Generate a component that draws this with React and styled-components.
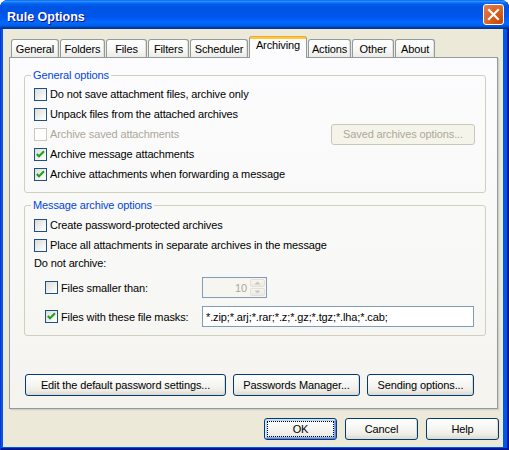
import React from "react";
import styled, { createGlobalStyle } from "styled-components";

const GlobalStyle = createGlobalStyle`
  html, body {
    margin: 0;
    padding: 0;
    background: #ffffff;
  }
  body {
    font-family: "Liberation Sans", Arial, sans-serif;
    font-size: 11px;
    letter-spacing: -0.12px;
    color: #000;
  }
`;

const Window = styled.div`
  width: 509px;
  height: 450px;
  display: flex;
  flex-direction: column;
  border-radius: 8px 8px 0 0;
  overflow: hidden;
  background: #0058e8;
  box-shadow: inset 1px 0 #0831d9, inset -1px -1px #00138c, inset -2px -2px #001ea0;
`;

const TitleBar = styled.div`
  flex: none;
  height: 29px;
  box-sizing: border-box;
  display: flex;
  align-items: center;
  justify-content: space-between;
  padding: 1px 5px 0 7px;
  background: linear-gradient(
    180deg,
    #0058ee 0%,
    #3593ff 4%,
    #288eff 6%,
    #127dff 8%,
    #036ffc 10%,
    #0262ee 14%,
    #0057e5 20%,
    #0054e3 24%,
    #0055eb 56%,
    #005bf5 66%,
    #026afe 76%,
    #0062ef 86%,
    #0052d6 92%,
    #0040ab 94%,
    #003092 100%
  );
`;

const Title = styled.span`
  color: #ffffff;
  font-weight: bold;
  font-size: 12.5px;
  letter-spacing: 0;
  padding-top: 3px;
  text-shadow: 1px 1px #0f1089;
`;

const CloseButton = styled.div`
  width: 21px;
  height: 21px;
  box-sizing: border-box;
  border: 1px solid #ffffff;
  border-radius: 3px;
  background: radial-gradient(circle at 85% 85%, #cc4600 0%, #dc6527 55%, #e5805a 100%);
  display: flex;
  align-items: center;
  justify-content: center;
  margin-bottom: 2px;
`;

const Frame = styled.div`
  flex: 1;
  display: flex;
  padding: 0 6px 3px 3px;
`;

const Client = styled.div`
  flex: 1;
  display: flex;
  flex-direction: column;
  background: #ece9d8;
`;

const TabStrip = styled.div`
  display: flex;
  align-items: flex-end;
  gap: 1px;
  height: 21px;
  margin-top: 7px;
  padding-left: 8px;
`;

const Tab = styled.div`
  position: relative;
  z-index: ${(p) => (p.$active ? 2 : 1)};
  box-sizing: border-box;
  width: ${(p) => p.$w}px;
  height: ${(p) => (p.$active ? 22 : 18)}px;
  margin-bottom: ${(p) => (p.$active ? -1 : 0)}px;
  display: flex;
  align-items: center;
  justify-content: center;
  padding-bottom: ${(p) => (p.$active ? 4 : 0)}px;
  padding-top: ${(p) => (p.$active ? 0 : 1)}px;
  border: 1px solid #919b9c;
  border-bottom: none;
  border-top: ${(p) => (p.$active ? "none" : "1px solid #919b9c")};
  border-radius: 3px 3px 0 0;
  background: ${(p) =>
    p.$active
      ? "linear-gradient(180deg, #e68b2c 0px, #ffc73c 1px, #ffc73c 3px, #fcfcfe 3px)"
      : "linear-gradient(180deg, #ffffff 0%, #f7f7f5 60%, #ecebe6 100%)"};
  box-shadow: ${(p) => (p.$active ? "none" : "inset -1px 0 #e3e1d9")};
`;

const Panel = styled.div`
  position: relative;
  z-index: 1;
  box-sizing: border-box;
  width: 489px;
  height: 352px;
  margin-left: 6px;
  padding: 11px 11px 0 14px;
  display: flex;
  flex-direction: column;
  border: 1px solid #919b9c;
  background: linear-gradient(180deg, #fcfcfe 0%, #f8f8f6 60%, #f4f3ee 100%);
  box-shadow: 1px 1px 0 #d2d0c6, 2px 2px 0 #e2e0d6;
`;

const Group = styled.fieldset`
  margin: ${(p) => p.$top || 0}px 0 0 0;
  width: 462px;
  box-sizing: border-box;
  padding: ${(p) => p.$pad};
  border: 1px solid #d0d0bf;
  border-radius: 3px;
  min-inline-size: 0;
`;

const Legend = styled.legend`
  margin-left: -3px;
  padding: 0 2px;
  line-height: 13px;
  color: #0046d5;
`;

const CheckRow = styled.div`
  display: flex;
  align-items: center;
  gap: 3px;
  height: 20px;
  color: ${(p) => (p.$disabled ? "#aca899" : "#000000")};
`;

const Box = styled.span`
  flex: none;
  width: 13px;
  height: 13px;
  box-sizing: border-box;
  display: flex;
  align-items: center;
  justify-content: center;
  border: 1px solid ${(p) => (p.$disabled ? "#cac8bb" : "#1c5180")};
  background: ${(p) =>
    p.$disabled
      ? "#ffffff"
      : "linear-gradient(135deg, #dcdcd7 0%, #ececea 45%, #f8f8f6 75%, #ffffff 100%)"};
`;

const Label = styled.span`
  white-space: nowrap;
`;

const Check = ({ checked, disabled, children }) => (
  <CheckRow $disabled={disabled}>
    <Box $disabled={disabled}>
      {checked && (
        <svg width="11" height="11" viewBox="0 0 11 11">
          <path d="M1.8 5 L4 7.3 L9 2.3" fill="none" stroke="#21a121" strokeWidth="2.1" />
        </svg>
      )}
    </Box>
    <Label>{children}</Label>
  </CheckRow>
);

const RowWithButton = styled.div`
  display: flex;
  align-items: center;
  justify-content: space-between;
  height: 20px;
`;

const Button = styled.button`
  box-sizing: border-box;
  width: ${(p) => p.$w}px;
  height: ${(p) => p.$h || 22}px;
  padding: 0;
  font: inherit;
  letter-spacing: inherit;
  color: #000000;
  border: 1px solid #003c74;
  border-radius: 3px;
  background: linear-gradient(180deg, #ffffff 0%, #f7f7f4 40%, #efeee9 75%, #e3e0d6 92%, #d6d0c5 100%);
  box-shadow: ${(p) =>
    p.$default
      ? "inset 1px 1px #cee7ff, inset -1px -1px #6982ee, inset 2px 2px #bcd4f6, inset -2px -2px #89ade4"
      : "inset -1px -1px #dedbd0"};
  outline: ${(p) => (p.$default ? "1px dotted #000000" : "none")};
  outline-offset: -4px;
`;

const DisabledButton = styled(Button)`
  color: #aca899;
  border-color: #c9c7ba;
  background: #f5f4ea;
  box-shadow: none;
`;

const Indent = styled.div`
  display: grid;
  grid-template-columns: 157px auto;
  align-items: center;
  padding-left: 11px;
  margin-top: ${(p) => p.$top}px;
`;

const PlainText = styled.div`
  height: 16px;
  line-height: 16px;
`;

const Spin = styled.div`
  box-sizing: border-box;
  width: 65px;
  height: 21px;
  padding: 1px;
  display: flex;
  border: 1px solid #7f9db9;
  background: #f6f5f0;
`;

const SpinValue = styled.span`
  flex: 1;
  align-self: center;
  text-align: right;
  padding-right: 3px;
  color: #aca899;
`;

const SpinButtons = styled.div`
  width: 15px;
  display: flex;
  flex-direction: column;
  gap: 1px;
`;

const SpinButton = styled.div`
  flex: 1;
  display: flex;
  align-items: center;
  justify-content: center;
  border: 1px solid #e3e1d7;
  border-radius: 2px;
  background: linear-gradient(180deg, #f6f5f1, #ebe9e1);
`;

const TextBox = styled.input`
  box-sizing: border-box;
  width: 272px;
  height: 21px;
  padding: 0 3px;
  border: 1px solid #7f9db9;
  background: #ffffff;
  font: inherit;
  letter-spacing: inherit;
  color: #000000;
  outline: none;
`;

const PanelButtons = styled.div`
  display: flex;
  gap: 7px;
  margin-top: 38px;
  margin-left: 1px;
`;

const DialogButtons = styled.div`
  display: flex;
  justify-content: flex-end;
  gap: 8px;
  margin-top: 9px;
  padding-right: 4px;
`;

const tabs = [
  { label: "General", w: 48 },
  { label: "Folders", w: 45 },
  { label: "Files", w: 41 },
  { label: "Filters", w: 41 },
  { label: "Scheduler", w: 58 },
  { label: "Archiving", w: 58, active: true },
  { label: "Actions", w: 43 },
  { label: "Other", w: 42 },
  { label: "About", w: 40 },
];

const Arrow = ({ up }) => (
  <svg width="7" height="4" viewBox="0 0 7 4">
    <path d={up ? "M0.5 3.5 L3.5 0.5 L6.5 3.5 Z" : "M0.5 0.5 L3.5 3.5 L6.5 0.5 Z"} fill="#c9c7ba" />
  </svg>
);

export default function App() {
  return (
    <>
      <GlobalStyle />
      <Window>
        <TitleBar>
          <Title>Rule Options</Title>
          <CloseButton>
            <svg width="19" height="19" viewBox="0 0 19 19">
              <path d="M5 5 L14 14 M14 5 L5 14" stroke="#ffffff" strokeWidth="2.2" strokeLinecap="square" />
            </svg>
          </CloseButton>
        </TitleBar>
        <Frame>
          <Client>
            <TabStrip>
              {tabs.map((t) => (
                <Tab key={t.label} $w={t.w} $active={t.active}>
                  {t.label}
                </Tab>
              ))}
            </TabStrip>
            <Panel>
              <Group $pad="2px 10px 8px 9px">
                <Legend>General options</Legend>
                <Check>Do not save attachment files, archive only</Check>
                <Check>Unpack files from the attached archives</Check>
                <RowWithButton>
                  <Check disabled>Archive saved attachments</Check>
                  <DisabledButton $w={144} $h={21}>
                    Saved archives options...
                  </DisabledButton>
                </RowWithButton>
                <Check checked>Archive message attachments</Check>
                <Check checked>Archive attachments when forwarding a message</Check>
              </Group>
              <Group $top={6} $pad="3px 10px 8px 9px">
                <Legend>Message archive options</Legend>
                <Check>Create password-protected archives</Check>
                <Check>Place all attachments in separate archives in the message</Check>
                <PlainText>Do not archive:</PlainText>
                <Indent $top={6}>
                  <Check>Files smaller than:</Check>
                  <Spin>
                    <SpinValue>10</SpinValue>
                    <SpinButtons>
                      <SpinButton>
                        <Arrow up />
                      </SpinButton>
                      <SpinButton>
                        <Arrow />
                      </SpinButton>
                    </SpinButtons>
                  </Spin>
                </Indent>
                <Indent $top={8}>
                  <Check checked>Files with these file masks:</Check>
                  <TextBox readOnly value="*.zip;*.arj;*.rar;*.z;*.gz;*.tgz;*.lha;*.cab;" />
                </Indent>
              </Group>
              <PanelButtons>
                <Button $w={201}>Edit the default password settings...</Button>
                <Button $w={127}>Passwords Manager...</Button>
                <Button $w={107}>Sending options...</Button>
              </PanelButtons>
            </Panel>
            <DialogButtons>
              <Button $w={73} $default>
                OK
              </Button>
              <Button $w={73}>Cancel</Button>
              <Button $w={73}>Help</Button>
            </DialogButtons>
          </Client>
        </Frame>
      </Window>
    </>
  );
}
